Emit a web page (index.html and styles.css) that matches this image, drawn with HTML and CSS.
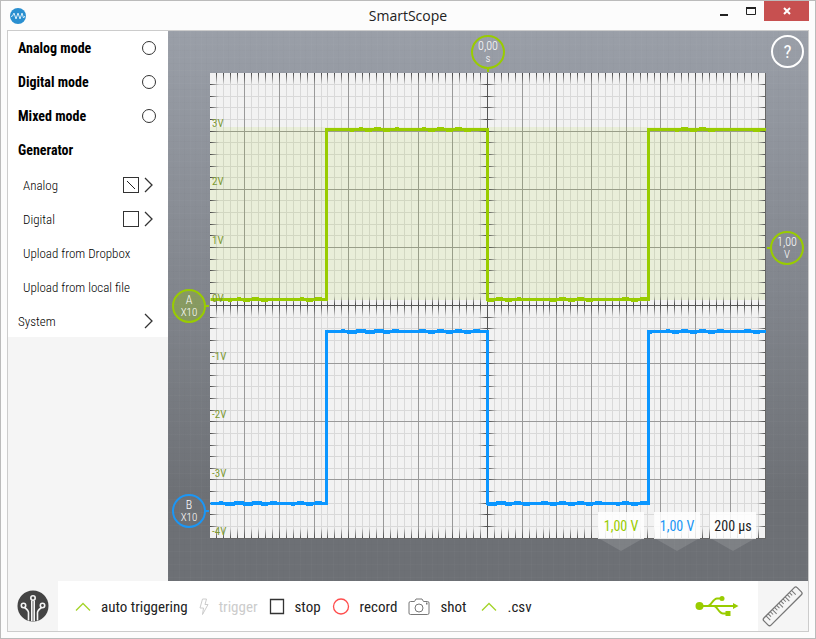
FILE: index.html
```html
<!DOCTYPE html>
<html lang="en">
<head>
  <meta charset="UTF-8">
  <meta name="viewport" content="width=device-width, initial-scale=1.0">
  <title>SmartScope</title>
  <link rel="stylesheet" href="styles.css">
</head>
<body>
  <div class="window">
    <header class="titlebar">
      <svg class="app-icon" viewBox="0 0 16 16">
        <circle cx="8" cy="8" r="8" fill="#2a8fd0"/>
        <path d="M1 8.500L2.500 8L4 5L6 11L8 5L10 11L12 5L13.500 10L15 8" fill="none" stroke="#d5ebf8" stroke-width="1"/>
      </svg>
      <h1>SmartScope</h1>
      <div class="win-buttons">
        <button class="win-btn" aria-label="Minimize">
          <svg width="12" height="10" viewBox="0 0 12 10"><path d="M2 8h8v2H2z" fill="#222"/></svg>
        </button>
        <button class="win-btn" aria-label="Maximize">
          <svg width="12" height="10" viewBox="0 0 12 10"><path d="M1.500 1.500h9v7h-9z" fill="none" stroke="#222"/><path d="M1 2h10" stroke="#222" stroke-width="2"/></svg>
        </button>
        <button class="win-btn close" aria-label="Close">
          <svg width="8" height="8" viewBox="0 0 8 8"><path d="M1 1l6 6M7 1l-6 6" stroke="#fff" stroke-width="2"/></svg>
        </button>
      </div>
    </header>

    <div class="client">
      <main class="main">
        <nav class="sidebar">
          <div class="menu">
            <div class="row bold">
              <label for="analog-mode">Analog mode</label>
              <input type="radio" name="mode" id="analog-mode">
            </div>
            <div class="row bold">
              <label for="digital-mode">Digital mode</label>
              <input type="radio" name="mode" id="digital-mode">
            </div>
            <div class="row bold">
              <label for="mixed-mode">Mixed mode</label>
              <input type="radio" name="mode" id="mixed-mode">
            </div>
            <h2 class="row bold">Generator</h2>
            <div class="row sub">
              <label for="gen-analog">Analog</label>
              <input type="checkbox" id="gen-analog" checked>
              <button class="arrow" aria-label="Analog options">
                <svg width="10" height="16" viewBox="0 0 10 16"><path d="M1 1l7 7l-7 7"/></svg>
              </button>
            </div>
            <div class="row sub">
              <label for="gen-digital">Digital</label>
              <input type="checkbox" id="gen-digital">
              <button class="arrow" aria-label="Digital options">
                <svg width="10" height="16" viewBox="0 0 10 16"><path d="M1 1l7 7l-7 7"/></svg>
              </button>
            </div>
            <button class="row sub">Upload from Dropbox</button>
            <button class="row sub">Upload from local file</button>
            <button class="row">
              <span class="grow">System</span>
              <svg class="chevron" width="10" height="16" viewBox="0 0 10 16"><path d="M1 1l7 7l-7 7"/></svg>
            </button>
          </div>
        </nav>

        <section class="scope">
          <div class="plot">
            <svg class="graph" id="graph">
              <defs>
                <linearGradient id="fade-down" x1="0" y1="0" x2="0" y2="1"><stop offset="0" stop-color="#444"/><stop offset="1" stop-color="#444" stop-opacity="0"/></linearGradient>
                <linearGradient id="fade-up" x1="0" y1="1" x2="0" y2="0"><stop offset="0" stop-color="#444"/><stop offset="1" stop-color="#444" stop-opacity="0"/></linearGradient>
                <linearGradient id="fade-right" x1="0" y1="0" x2="1" y2="0"><stop offset="0" stop-color="#444"/><stop offset="1" stop-color="#444" stop-opacity="0"/></linearGradient>
                <linearGradient id="fade-left" x1="1" y1="0" x2="0" y2="0"><stop offset="0" stop-color="#444"/><stop offset="1" stop-color="#444" stop-opacity="0"/></linearGradient>
              </defs>
              <g id="drawing"></g>
            </svg>
            <button class="knob time">0,00<small>s</small></button>
            <button class="knob level">1,00<small>V</small></button>
            <button class="knob channel-a">A<small>X10</small></button>
            <button class="knob channel-b">B<small>X10</small></button>
            <div class="readouts">
              <div class="readout green">1,00 V</div>
              <div class="readout blue">1,00 V</div>
              <div class="readout">200 µs</div>
            </div>
          </div>
          <button class="help" aria-label="Help">?</button>
        </section>
      </main>

      <footer class="toolbar">
        <button class="corner" aria-label="Menu">
          <svg width="32" height="32" viewBox="0 0 32 32">
            <circle cx="16" cy="16" r="15.500" fill="#444"/>
            <g fill="none" stroke="#f5f5f5" stroke-width="1.600">
              <path d="M14.800 10.500v20.500M17.200 10.500v20.500M11.500 30.500v-8q0-2-4-5M20.500 30.500v-8q0-2 4-5"/>
              <circle cx="16" cy="8" r="2.200" fill="#444"/>
              <circle cx="6.500" cy="15.500" r="2.200" fill="#444"/>
              <circle cx="25.500" cy="15.500" r="2.200" fill="#444"/>
            </g>
          </svg>
        </button>
        <div class="tools">
          <button class="tool">
            <svg width="16" height="18" viewBox="0 0 16 18"><path d="M1 12.500l7-7l7 7" fill="none" stroke="#a4d42a" stroke-width="1.300"/></svg>
            auto triggering
          </button>
          <button class="tool" disabled>
            <svg width="10" height="18" viewBox="0 0 10 18"><path d="M3.500 1h4L6 6.500h3L3.500 16.500L4.500 10H1z" fill="none" stroke="#ccc"/></svg>
            trigger
          </button>
          <button class="tool">
            <svg width="16" height="18" viewBox="0 0 16 18"><path d="M1.500 1.500h13v14h-13z" fill="none" stroke="#333" stroke-width="1.300"/></svg>
            stop
          </button>
          <button class="tool">
            <svg width="18" height="18" viewBox="0 0 18 18"><circle cx="9" cy="8.500" r="7.500" fill="none" stroke="#ff4d4d" stroke-width="1.300"/></svg>
            record
          </button>
          <button class="tool">
            <svg width="22" height="18" viewBox="0 0 22 18">
              <g fill="none" stroke="#777">
                <path d="M2.500 3.500h4l1.500-2.500h6l1.500 2.500h4q1.500 0 1.500 1.500v10q0 1.500-1.500 1.500h-17q-1.500 0-1.500-1.500v-10q0-1.500 1.500-1.500z"/>
                <circle cx="11" cy="10" r="4"/>
                <path d="M18 5.500h1.500" stroke-width="2"/>
              </g>
            </svg>
            shot
          </button>
          <button class="tool csv">
            <svg width="16" height="18" viewBox="0 0 16 18"><path d="M1 12.500l7-7l7 7" fill="none" stroke="#a4d42a" stroke-width="1.300"/></svg>
            .csv
          </button>
        </div>
        <svg class="usb" width="44" height="22" viewBox="0 0 44 22">
          <g fill="none" stroke="#9c0" stroke-width="1.800">
            <path d="M4 11h35M13 11c3 0 5-7.500 9-7.500h5M19 11c3 0 5 7.500 9 7.500h5"/>
          </g>
          <g fill="#9c0">
            <circle cx="4.500" cy="11" r="4"/>
            <circle cx="27" cy="3.500" r="2.500"/>
            <path d="M30.500 16h5v5h-5zM38 8l5.500 3l-5.500 3z"/>
          </g>
        </svg>
        <button class="corner" aria-label="Measurements">
          <svg width="44" height="44" viewBox="0 0 44 44">
            <g transform="rotate(-45 22 22)" fill="none" stroke="#777">
              <rect x="-2" y="17" width="47" height="10" rx="2" stroke-width="1.300"/>
              <path d="M3 17v6M6 17v4M9 17v4M12 17v6M15 17v4M18 17v4M21 17v6M24 17v4M27 17v4M30 17v6M33 17v4M36 17v4M39 17v6"/>
            </g>
          </svg>
        </button>
      </footer>
    </div>
  </div>

  <script src="script.js"></script>
</body>
</html>
```

FILE: styles.css
```css
* {
  box-sizing: border-box;
}

body {
  margin: 0;
  font-family: "Roboto Condensed", "Liberation Sans Narrow", Roboto, sans-serif;
  font-size: 14px;
  color: #222;
}

button {
  border: none;
  padding: 0;
  background: none;
  font: inherit;
  color: inherit;
  cursor: pointer;
}

svg {
  display: block;
  flex: none;
}

.window {
  min-height: 100vh;
  display: flex;
  flex-direction: column;
  border: 1px solid #bbb;
  padding: 0 6px 6px;
  background-color: #fcfcfc;
}

/* title bar */
.titlebar {
  height: 29px;
  display: grid;
  grid-template-columns: 1fr auto 1fr;
  align-items: center;
}

.app-icon {
  width: 16px;
  height: 16px;
  margin-left: 3px;
}

h1 {
  margin: 0;
  font-family: "Open Sans", sans-serif;
  font-size: 14px;
  font-weight: normal;
}

.win-buttons {
  display: flex;
  align-self: start;
  justify-content: flex-end;
}

.win-btn {
  width: 27px;
  height: 20px;
  display: flex;
  align-items: center;
  justify-content: center;
}

.win-btn.close {
  width: 45px;
  background-color: #c75050;
}

.client {
  flex: 1;
  display: flex;
  flex-direction: column;
  border: 1px solid #ccc;
}

.main {
  flex: 1;
  display: flex;
}

/* sidebar */
.sidebar {
  width: 160px;
  background-color: #f5f5f5;
}

.menu {
  background-color: #fff;
}

.row {
  width: 100%;
  height: 34px;
  margin: 0;
  padding: 2px 12px 0 10px;
  display: flex;
  align-items: center;
  gap: 5px;
  font-size: 13px;
  font-weight: 300;
  text-align: left;
  color: #000;
}

.row.bold {
  padding-top: 0;
  font-size: 14px;
  font-weight: bold;
}

.row.sub {
  padding-left: 15px;
}

.row label,
.grow {
  flex: 1;
}

.row input {
  appearance: none;
  margin: 0;
  border: 1px solid #333;
}

.row input[type="radio"] {
  width: 14px;
  height: 14px;
  border-radius: 50%;
}

.row input[type="checkbox"] {
  width: 16px;
  height: 16px;
}

.row input[type="checkbox"]:checked {
  background: linear-gradient(45deg, transparent 44%, #222 44%, #222 56%, transparent 56%) center / 8px 8px no-repeat;
}

.arrow,
.chevron {
  margin-right: 2px;
}

.arrow path,
.chevron path {
  fill: none;
  stroke: #333;
  stroke-width: 1.3;
}

/* scope */
.scope {
  flex: 1;
  position: relative;
  display: flex;
  padding: 42px;
  background:
    repeating-linear-gradient(90deg, rgba(255, 255, 255, 0.02) 0 1px, transparent 1px 5px, rgba(0, 0, 0, 0.01) 5px 6px, transparent 6px 11px),
    repeating-linear-gradient(rgba(255, 255, 255, 0.02) 0 1px, transparent 1px 6px, rgba(0, 0, 0, 0.01) 6px 7px, transparent 7px 13px),
    linear-gradient(#9a9fa8, #80848b 50%, #6d7075 85%);
}

.plot {
  flex: 1;
  position: relative;
  min-height: 300px;
  background-color: #f2f2f2;
}

.graph {
  position: absolute;
  width: 100%;
  height: 100%;
}

.graph text {
  font-size: 11px;
  fill: #7d9a32;
}

.knob {
  position: absolute;
  width: 34px;
  height: 34px;
  margin: -17px;
  display: flex;
  flex-direction: column;
  align-items: center;
  justify-content: center;
  border: 2px solid #9c0;
  border-radius: 50%;
  font-size: 12px;
  font-weight: 300;
  line-height: 14px;
  color: #fff;
}

.knob small {
  font-size: 11px;
  line-height: 12px;
}

/* stem that joins a knob to the plot */
.knob::after {
  content: "";
  position: absolute;
  top: 14px;
  left: 100%;
  width: 5px;
  height: 2px;
  background-color: #9c0;
}

.time {
  left: 50%;
  top: -21px;
}

.time::after {
  top: 100%;
  left: 14px;
  width: 2px;
  height: 5px;
}

.level {
  left: calc(100% + 21px);
  top: 37.5%;
}

.level::after {
  left: auto;
  right: 100%;
}

.channel-a {
  left: -21px;
  top: 50%;
  background-color: rgba(153, 204, 0, 0.3);
}

.channel-b {
  left: -21px;
  top: 94%;
  border-color: #1b96f5;
}

.channel-b::after {
  background-color: #1b96f5;
}

.help {
  position: absolute;
  top: 4px;
  right: 4px;
  width: 33px;
  height: 33px;
  border: 2px solid #fff;
  border-radius: 50%;
  font-size: 19px;
  color: #fff;
}

.readouts {
  position: absolute;
  right: 10px;
  bottom: 0;
  display: flex;
  gap: 10px;
}

.readout {
  position: relative;
  width: 46px;
  height: 27px;
  line-height: 28px;
  text-align: center;
  white-space: nowrap;
  background-color: rgba(255, 255, 255, 0.85);
}

.readout::after {
  content: "";
  position: absolute;
  top: 100%;
  left: 2px;
  right: 2px;
  height: 12px;
  background-color: rgba(255, 255, 255, 0.12);
  clip-path: polygon(0 0, 100% 0, 50% 100%);
}

.green {
  color: #9c0;
}

.blue {
  color: #1b96f5;
}

/* bottom toolbar */
.toolbar {
  height: 50px;
  display: flex;
  align-items: center;
  background-color: #fff;
}

.corner {
  width: 50px;
  height: 50px;
  display: flex;
  align-items: center;
  justify-content: center;
  background-color: #f5f5f5;
}

.tools {
  flex: 1;
  display: flex;
  gap: 11px;
  padding-left: 17px;
}

.tool {
  display: flex;
  align-items: center;
  gap: 10px;
  padding-top: 2px;
  font-size: 15px;
  white-space: nowrap;
}

.tool:disabled {
  color: #ccc;
}

.csv {
  margin-left: 4px;
}

.usb {
  margin-right: 19px;
}
```

FILE: script.js
```js
const graph = document.getElementById('graph');
const drawing = document.getElementById('drawing');

function rect(x, y, w, h, fill) {
  return `<rect x="${x}" y="${y}" width="${w}" height="${h}" fill="${fill}"/>`;
}

// Square wave with a bit of noise on the flat parts
function trace(w, low, high, noise, color) {
  const edges = [0, w * 0.21, w * 0.499, w * 0.788, w].map(Math.floor);
  let d = '';
  let bumps = '';
  for (let i = 0; i < 4; i++) {
    const y = Math.floor(i % 2 ? high : low) + 0.5;
    const x1 = edges[i] + 0.5;
    const x2 = edges[i + 1] + 0.5;
    d += `${d ? 'L' : 'M'}${x1} ${y}L${x2} ${y}`;
    for (let x = edges[i]; x < edges[i + 1] - 4; x += 3) {
      const n = Math.sin(x * 1.7) + Math.sin(x * 0.31);
      if (Math.abs(n) > noise) bumps += rect(x, n > 0 ? y - 2.5 : y + 1.5, 4, 1, color);
    }
  }
  return `<path d="${d}" fill="none" stroke="${color}" stroke-width="3"/>` + bumps;
}

function draw() {
  const w = graph.clientWidth;
  const h = graph.clientHeight;
  const cx = Math.floor(w / 2) - 1;
  const cy = Math.floor(h / 2) - 1;
  let out = '';

  // minor lines first, then the major ones over them
  for (const major of [false, true]) {
    const color = major ? '#999' : '#d9d9d9';
    for (let i = 1; i < 80; i++) {
      if ((i % 5 === 0) === major) out += rect(Math.floor(i * (w - 1) / 80), 0, 1, h, color);
    }
    for (let i = 1; i < 40; i++) {
      if ((i % 5 === 0) === major) out += rect(0, Math.floor(i * (h - 1) / 40), w, 1, color);
    }
  }

  out += rect(0, Math.round(h * 0.116), w, Math.round(h * 0.371), 'rgba(153, 204, 0, 0.1)');

  // ticks at the edges and along both axes
  for (let i = 1; i < 80; i++) {
    const x = Math.floor(i * (w - 1) / 80);
    out += rect(x, 0, 1, 11, 'url(#fade-down)');
    out += rect(x, cy - 9, 1, 9, 'url(#fade-up)');
    out += rect(x, cy, 1, 11, 'url(#fade-down)');
    out += rect(x, h - 11, 1, 11, 'url(#fade-up)');
  }
  for (let i = 1; i < 40; i++) {
    const y = Math.floor(i * (h - 1) / 40);
    out += rect(0, y, 9, 1, 'url(#fade-right)');
    out += rect(cx - 9, y, 9, 1, 'url(#fade-left)');
    out += rect(cx, y, 10, 1, 'url(#fade-right)');
    out += rect(w - 9, y, 9, 1, 'url(#fade-left)');
  }
  out += rect(cx, 0, 1, h, '#555') + rect(0, cy, w, 1, '#555');
  out += rect(w - 1, 0, 1, h, '#666') + rect(0, h - 1, w, 1, '#666');

  out += trace(w, h * 0.487, h * 0.122, 1, '#9c0');
  out += trace(w, h * 0.924, h * 0.555, 0.5, '#0a96ff');

  for (let i = 0; i < 8; i++) {
    out += `<text x="2" y="${Math.round(h * (0.116 + i / 8))}">${3 - i}V</text>`;
  }
  drawing.innerHTML = out;
}

draw();
window.addEventListener('resize', draw);
```
